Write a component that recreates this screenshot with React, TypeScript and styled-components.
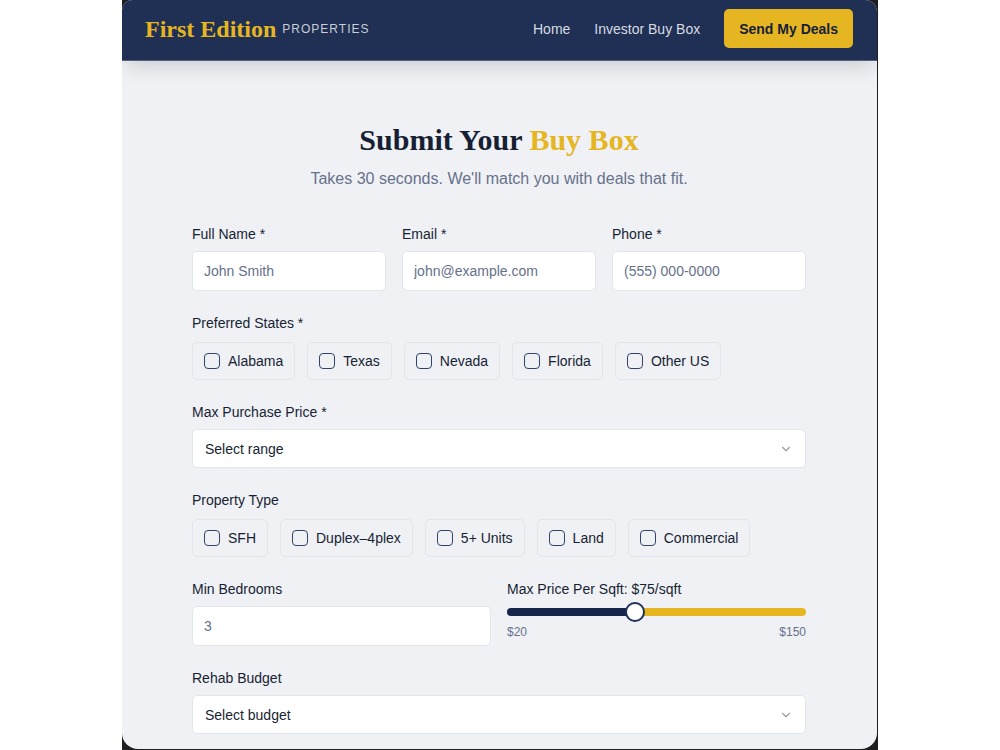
import React, { useState } from "react";
import styled, { createGlobalStyle } from "styled-components";
import { ChevronDown } from "lucide-react";

const navy = "#1f3054";
const gold = "#e6b622";
const ink = "#161f33";
const muted = "#66718c";
const line = "#e1e5ec";
const surface = "#f0f1f5";

const GlobalStyle = createGlobalStyle`
  *, *::before, *::after { box-sizing: border-box; }
  body {
    margin: 0;
    background: #fff;
    color: ${ink};
    font-family: "Liberation Sans", Arial, sans-serif;
    font-size: 14px;
    line-height: 18px;
  }
  input, select, button { font: inherit; color: inherit; }
`;

const Backdrop = styled.div`
  max-width: 756px;
  min-height: 100vh;
  margin: 0 auto;
  padding: 0 1px 1px 0;
  background: #1e1f20;
`;

const Page = styled.div`
  min-height: calc(100vh - 1px);
  background: ${surface};
  border-radius: 10px 12px 16px 16px;
  overflow: hidden;
`;

const Header = styled.header`
  display: flex;
  align-items: center;
  justify-content: space-between;
  padding: 9px 24px 12px 23px;
  background: ${navy};
  border-bottom: 1px solid #56637f;
  box-shadow: 0 8px 20px -4px rgba(20, 25, 40, 0.18);
`;

const Brand = styled.a`
  display: flex;
  align-items: center;
  gap: 6px;
  text-decoration: none;
`;

const BrandName = styled.span`
  font: bold 24px/28px "Liberation Serif", "Times New Roman", serif;
  color: ${gold};
`;

const BrandTag = styled.span`
  font-size: 12px;
  letter-spacing: 1px;
  text-transform: uppercase;
  color: #c9cdd6;
`;

const Nav = styled.nav`
  display: flex;
  align-items: center;
  gap: 24px;
`;

const NavLink = styled.a`
  color: #d8dbe1;
  text-decoration: none;
`;

const CallToAction = styled.button`
  height: 39px;
  padding: 0 15px;
  border: 0;
  border-radius: 5px;
  background: ${gold};
  color: #14203a;
  font-weight: bold;
`;

const Main = styled.main`
  padding: 61px 71px 15px 70px;
`;

const Heading = styled.h1`
  margin: 0;
  text-align: center;
  font: bold 30px/36px "Liberation Serif", "Times New Roman", serif;
`;

const Accent = styled.span`
  color: ${gold};
`;

const Lead = styled.p`
  margin: 9px 0 34px;
  text-align: center;
  font-size: 16px;
  line-height: 24px;
  color: ${muted};
`;

const Form = styled.form`
  display: flex;
  flex-direction: column;
  gap: 23px;
`;

const Columns = styled.div<{ $count: number }>`
  display: grid;
  grid-template-columns: repeat(${(p) => p.$count}, minmax(0, 1fr));
  gap: 16px;
`;

const Field = styled.div`
  display: flex;
  flex-direction: column;
  gap: 8px;
`;

const Label = styled.label`
  display: block;
`;

const TextInput = styled.input`
  width: 100%;
  height: 40px;
  padding: 0 11px;
  border: 1px solid ${line};
  border-radius: 5px;
  background: #fff;
  &::placeholder { color: ${muted}; opacity: 1; }
`;

const SelectWrap = styled.div`
  display: grid;
  align-items: center;
  & > * { grid-area: 1 / 1; }
  & > svg {
    justify-self: end;
    margin-right: 13px;
    color: #9a9da6;
    pointer-events: none;
  }
`;

const Select = styled.select`
  appearance: none;
  width: 100%;
  height: 39px;
  padding: 0 12px;
  border: 1px solid ${line};
  border-radius: 5px;
  background: #fff;
`;

const Group = styled.fieldset`
  min-width: 0;
  margin: 0;
  padding: 0;
  border: 0;
`;

const Legend = styled.legend`
  padding: 0;
  margin-bottom: 10px;
`;

const Chips = styled.div`
  display: flex;
  flex-wrap: wrap;
  gap: 12px;
`;

const Chip = styled.label`
  display: flex;
  align-items: center;
  gap: 8px;
  height: 38px;
  padding: 0 11px;
  border: 1px solid ${line};
  border-radius: 5px;
`;

const Check = styled.input`
  appearance: none;
  width: 16px;
  height: 16px;
  margin: 0;
  border: 1px solid #33436a;
  border-radius: 4px;
  &:checked { background: ${navy}; }
`;

const Slider = styled.input<{ $fill: number }>`
  appearance: none;
  display: block;
  width: 100%;
  height: 20px;
  margin: 4px 0 2px;
  background: transparent;
  &::-webkit-slider-runnable-track {
    height: 8px;
    border-radius: 4px;
    background: linear-gradient(to right, #15254b ${(p) => p.$fill}%, ${gold} ${(p) => p.$fill}%);
  }
  &::-webkit-slider-thumb {
    appearance: none;
    width: 20px;
    height: 20px;
    margin-top: -6px;
    border: 2px solid ${navy};
    border-radius: 50%;
    background: #fff;
  }
`;

const Scale = styled.div`
  display: flex;
  justify-content: space-between;
  font-size: 12px;
  line-height: 16px;
  color: ${muted};
`;

const contacts = [
  { id: "name", label: "Full Name *", type: "text", placeholder: "John Smith" },
  { id: "email", label: "Email *", type: "email", placeholder: "john@example.com" },
  { id: "phone", label: "Phone *", type: "tel", placeholder: "(555) 000-0000" },
];
const states = ["Alabama", "Texas", "Nevada", "Florida", "Other US"];
const types = ["SFH", "Duplex–4plex", "5+ Units", "Land", "Commercial"];

function ChipGroup({ title, name, options }: { title: string; name: string; options: string[] }) {
  return (
    <Group>
      <Legend>{title}</Legend>
      <Chips>
        {options.map((option) => (
          <Chip key={option}>
            <Check type="checkbox" name={name} value={option} />
            {option}
          </Chip>
        ))}
      </Chips>
    </Group>
  );
}

function SelectField({ id, label, prompt }: { id: string; label: string; prompt: string }) {
  return (
    <Field>
      <Label htmlFor={id}>{label}</Label>
      <SelectWrap>
        <Select id={id} defaultValue="">
          <option value="">{prompt}</option>
        </Select>
        <ChevronDown size={14} strokeWidth={2} aria-hidden="true" />
      </SelectWrap>
    </Field>
  );
}

export default function App() {
  const [price, setPrice] = useState(75);
  return (
    <>
      <GlobalStyle />
      <Backdrop>
        <Page>
          <Header>
            <Brand href="#">
              <BrandName>First Edition</BrandName>
              <BrandTag>Properties</BrandTag>
            </Brand>
            <Nav>
              <NavLink href="#">Home</NavLink>
              <NavLink href="#buy-box">Investor Buy Box</NavLink>
              <CallToAction type="button">Send My Deals</CallToAction>
            </Nav>
          </Header>
          <Main id="buy-box">
            <Heading>
              Submit Your <Accent>Buy Box</Accent>
            </Heading>
            <Lead>Takes 30 seconds. We'll match you with deals that fit.</Lead>
            <Form>
              <Columns $count={3}>
                {contacts.map((c) => (
                  <Field key={c.id}>
                    <Label htmlFor={c.id}>{c.label}</Label>
                    <TextInput id={c.id} type={c.type} placeholder={c.placeholder} />
                  </Field>
                ))}
              </Columns>
              <ChipGroup title="Preferred States *" name="states" options={states} />
              <SelectField id="max-price" label="Max Purchase Price *" prompt="Select range" />
              <ChipGroup title="Property Type" name="types" options={types} />
              <Columns $count={2}>
                <Field>
                  <Label htmlFor="bedrooms">Min Bedrooms</Label>
                  <TextInput id="bedrooms" type="number" placeholder="3" />
                </Field>
                <div>
                  <Label htmlFor="sqft">{`Max Price Per Sqft: $${price}/sqft`}</Label>
                  <Slider
                    id="sqft"
                    type="range"
                    min={20}
                    max={150}
                    value={price}
                    $fill={((price - 20) / 130) * 100}
                    onChange={(e) => setPrice(Number(e.target.value))}
                  />
                  <Scale>
                    <span>$20</span>
                    <span>$150</span>
                  </Scale>
                </div>
              </Columns>
              <SelectField id="rehab" label="Rehab Budget" prompt="Select budget" />
            </Form>
          </Main>
        </Page>
      </Backdrop>
    </>
  );
}
